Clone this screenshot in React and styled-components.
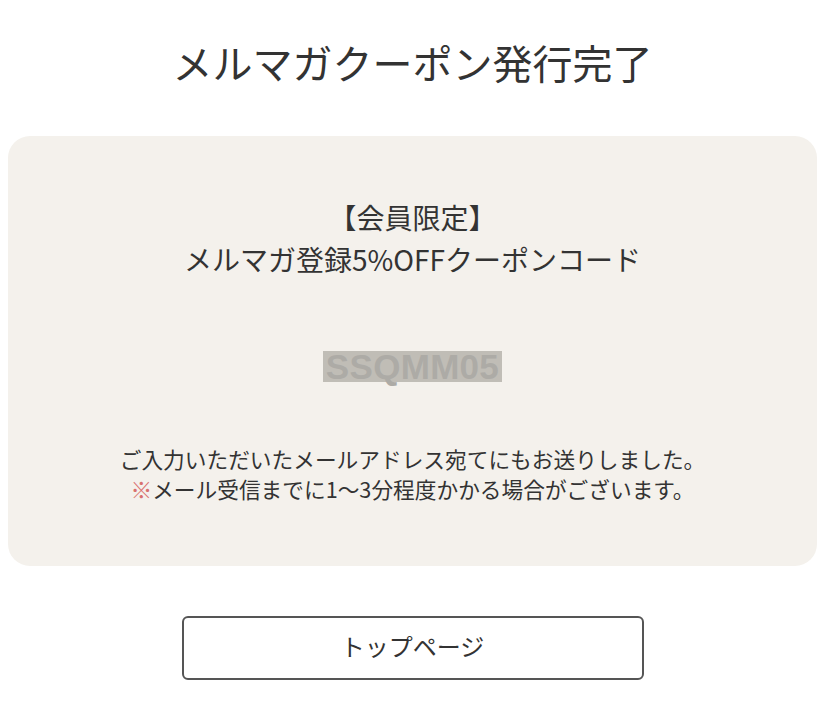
import React from "react";
import styled, { createGlobalStyle } from "styled-components";

const Global = createGlobalStyle`
  html, body { margin: 0; padding: 0; background: #fff; }
  body { font-family: "Noto Sans CJK JP", "Noto Sans", sans-serif; color: #333; }
`;

const Page = styled.div`
  width: 825px;
  padding: 33px 8px 0;
  box-sizing: border-box;
  display: flex;
  flex-direction: column;
  align-items: center;
`;

const Title = styled.h1`
  margin: 0;
  font-size: 40px;
  font-weight: 400;
  line-height: 58px;
  color: #333;
`;

const Card = styled.section`
  margin-top: 45px;
  width: 100%;
  height: 430px;
  box-sizing: border-box;
  background: #f4f1ec;
  border-radius: 22px;
  display: flex;
  flex-direction: column;
  align-items: center;
  padding-top: 60px;
`;

const Heading = styled.p`
  margin: 0;
  font-size: 28px;
  line-height: 42px;
  text-align: center;
  color: #333;
`;

const Code = styled.span`
  margin-top: 71px;
  display: inline-block;
  background: #c0bdb6;
  color: #adaba6;
  font-family: "Liberation Sans", Arial, sans-serif;
  font-weight: 700;
  font-size: 35px;
  line-height: 31px;
  height: 31px;
  padding: 0 3px;
  letter-spacing: 0.3px;
`;

const Note = styled.p`
  margin: 62px 0 0;
  font-size: 21.7px;
  line-height: 30px;
  text-align: center;
  color: #333;
`;

const Mark = styled.span`
  color: #d9706e;
`;

const Button = styled.a`
  margin-top: 50px;
  width: 462px;
  height: 64px;
  box-sizing: border-box;
  border: 2px solid #555;
  border-radius: 6px;
  display: flex;
  align-items: center;
  justify-content: center;
  font-size: 24px;
  color: #333;
  text-decoration: none;
  padding-bottom: 6px;
`;

export default function App() {
  return (
    <>
      <Global />
      <Page>
        <Title>メルマガクーポン発行完了</Title>
        <Card>
          <Heading>
            【会員限定】
            <br />
            メルマガ登録5%OFFクーポンコード
          </Heading>
          <Code>SSQMM05</Code>
          <Note>
            ご入力いただいたメールアドレス宛てにもお送りしました。
            <br />
            <Mark>※</Mark>メール受信までに1〜3分程度かかる場合がございます。
          </Note>
        </Card>
        <Button href="#">トップページ</Button>
      </Page>
    </>
  );
}
